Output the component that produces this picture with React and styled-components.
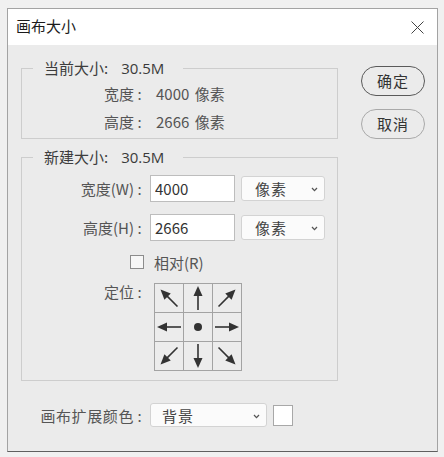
import React from 'react';
import styled, { createGlobalStyle } from 'styled-components';

const GlobalStyle = createGlobalStyle`
  html, body { margin: 0; padding: 0; background: #f0f0f0; }
  body {
    font-family: "Noto Sans CJK SC", "Microsoft YaHei", sans-serif;
    -webkit-font-smoothing: antialiased;
  }
  #root { padding: 8px 0 0 7px; }
`;

const Window = styled.div`
  box-sizing: content-box;
  width: 429px;
  height: 442px;
  border: 1px solid #a3a3a3;
  border-bottom-color: #5f5f5f;
  background: #ebebeb;
  display: flex;
  flex-direction: column;
`;

const TitleBar = styled.div`
  height: 36px;
  background: #ffffff;
  display: flex;
  align-items: center;
  justify-content: space-between;
  padding: 0 13px 0 8px;
`;

const Title = styled.div`
  font-size: 15px;
  color: #1b1b1b;
  line-height: 20px;
  margin-top: -2px;
`;

const CloseIcon = styled.svg`
  width: 13px;
  height: 13px;
  display: block;
`;

const Body = styled.div`
  flex: 1;
  display: flex;
  gap: 23px;
  padding: 13px 12px 0 13px;
`;

const LeftColumn = styled.div`
  width: 317px;
  display: flex;
  flex-direction: column;
`;

const Group = styled.fieldset`
  margin: ${p => p.$top || 0}px 0 0;
  min-width: 0;
  border: 1px solid #cdcdcd;
  padding: ${p => p.$pt}px 0 ${p => p.$pb}px;
`;

const Legend = styled.legend`
  margin-left: 11px;
  padding: 0 19px 0 11px;
  height: 20px;
  line-height: 20px;
  font-size: 15px;
  color: #3d3d3d;
  white-space: nowrap;
`;

const LegendValue = styled.span`
  font-family: "Open Sans", "Noto Sans", sans-serif;
  font-weight: 500;
  font-size: 15px;
  line-height: 20px;
  margin-left: 13px;
  color: #3a3a3a;
`;

const InfoGrid = styled.div`
  display: grid;
  grid-template-columns: 123px 1fr;
  column-gap: 5px;
  grid-auto-rows: 28px;
  align-items: center;
`;

const Label = styled.div`
  font-size: 15px;
  color: #555;
  text-align: right;
  white-space: nowrap;
  letter-spacing: ${p => p.$spread ? '0.6px' : '0'};
  align-self: ${p => p.$top ? 'start' : 'center'};
  line-height: ${p => p.$top ? '18px' : 'normal'};
`;

const Colon = styled.span`
  display: inline-block;
  width: 11px;
  text-align: center;
  letter-spacing: 0;
`;

const Value = styled.div`
  font-size: 15px;
  color: #555;
  padding-left: 6px;
  word-spacing: 2px;
`;

const FormGrid = styled.div`
  display: grid;
  grid-template-columns: 123px 1fr;
  column-gap: 5px;
  row-gap: 12px;
  grid-template-rows: 27px 27px 18px auto;
  align-items: center;
`;

const FieldLine = styled.div`
  display: flex;
  align-items: center;
  gap: 6px;
`;

const NumInput = styled.input`
  box-sizing: border-box;
  width: 85px;
  height: 27px;
  margin: 0;
  border: 1px solid #bdbdbd;
  background: #ffffff;
  padding: 0 4px 1px;
  font-family: inherit;
  font-size: 15px;
  color: #333;
  outline: none;
`;

const FakeSelect = styled.div`
  box-sizing: border-box;
  width: ${p => p.$w}px;
  height: ${p => p.$h}px;
  background: #fbfbfb;
  border: 1px solid #d3d3d3;
  border-radius: 3px;
  display: flex;
  align-items: center;
  justify-content: space-between;
  padding: 0 6px 0 ${p => p.$pl}px;
  font-size: 15px;
  color: #444;
  letter-spacing: 1px;
`;

const Chevron = styled.svg`
  width: 7px;
  height: 5px;
  display: block;
  margin-top: 2px;
`;

const CheckBox = styled.div`
  justify-self: end;
  margin-right: 1px;
  box-sizing: border-box;
  width: 14px;
  height: 14px;
  border: 1px solid #8c8c8c;
  background: #f7f7f7;
`;

const CheckText = styled.div`
  font-size: 15px;
  color: #555;
  padding-left: 4px;
`;

const AnchorGrid = styled.div`
  display: grid;
  grid-template-columns: repeat(3, 28px);
  grid-auto-rows: 28px;
  gap: 1px;
  padding: 1px;
  margin-left: 4px;
  background: #a3a3a3;
  width: max-content;
`;

const AnchorCell = styled.div`
  background: #ececec;
  display: flex;
  align-items: center;
  justify-content: center;
`;

const ArrowSvg = styled.svg`
  width: 28px;
  height: 28px;
  display: block;
`;

const BottomRow = styled.div`
  margin-top: 22px;
  display: grid;
  grid-template-columns: 124px 117px 20px;
  column-gap: 5px;
  align-items: center;
`;

const Swatch = styled.div`
  box-sizing: border-box;
  width: 20px;
  height: 21px;
  margin-left: 1px;
  background: #ffffff;
  border: 1px solid #a8a8a8;
`;

const ButtonColumn = styled.div`
  display: flex;
  flex-direction: column;
  gap: 13px;
  margin-top: 8px;
`;

const PillButton = styled.button`
  box-sizing: border-box;
  width: 64px;
  height: 30px;
  border-radius: 15px;
  border: 1px solid ${p => p.$primary ? '#5a5a5a' : '#a9a9a9'};
  background: transparent;
  font-family: inherit;
  font-size: 15px;
  color: #333;
  padding: 0 0 1px;
  letter-spacing: 1px;
`;

const ChevronIcon = () => (
  <Chevron viewBox="0 0 7 5">
    <polyline points="1,1 3.5,3.6 6,1" fill="none" stroke="#555" strokeWidth="1.3" />
  </Chevron>
);

const Arrow = ({ angle }) => (
  <ArrowSvg viewBox="0 0 28 28">
    <g transform={`rotate(${angle} 14 14)`} fill="#333" stroke="#333">
      <line x1="14" y1="26" x2="14" y2="11" strokeWidth="1.6" />
      <polygon points="14,2 9.5,12 18.5,12" stroke="none" />
    </g>
  </ArrowSvg>
);

const Dot = () => (
  <ArrowSvg viewBox="0 0 28 28">
    <circle cx="14" cy="14" r="4" fill="#333" />
  </ArrowSvg>
);

const anchors = [-45, 0, 45, -90, null, 90, -135, 180, 135];

const FieldLabel = ({ text, ...rest }) => (
  <Label {...rest}>
    {text}
    <Colon>:</Colon>
  </Label>
);

export default function App() {
  return (
    <>
      <GlobalStyle />
      <Window>
        <TitleBar>
          <Title>画布大小</Title>
          <CloseIcon viewBox="0 0 13 13">
            <path d="M0.5 0.5 L12.5 12.5 M12.5 0.5 L0.5 12.5" stroke="#444" strokeWidth="1" fill="none" />
          </CloseIcon>
        </TitleBar>
        <Body>
          <LeftColumn>
            <Group $pt={1} $pb={3}>
              <Legend>
                当前大小:<LegendValue>30.5M</LegendValue>
              </Legend>
              <InfoGrid>
                <FieldLabel text="宽度" />
                <Value>4000 像素</Value>
                <FieldLabel text="高度" />
                <Value>2666 像素</Value>
              </InfoGrid>
            </Group>
            <Group $top={8} $pt={8} $pb={9}>
              <Legend>
                新建大小:<LegendValue>30.5M</LegendValue>
              </Legend>
              <FormGrid>
                <FieldLabel text="宽度(W)" />
                <FieldLine>
                  <NumInput defaultValue="4000" />
                  <FakeSelect $w={84} $h={25} $pl={13}>
                    <span>像素</span>
                    <ChevronIcon />
                  </FakeSelect>
                </FieldLine>
                <FieldLabel text="高度(H)" />
                <FieldLine>
                  <NumInput defaultValue="2666" />
                  <FakeSelect $w={84} $h={25} $pl={13}>
                    <span>像素</span>
                    <ChevronIcon />
                  </FakeSelect>
                </FieldLine>
                <CheckBox />
                <CheckText>相对(R)</CheckText>
                <FieldLabel text="定位" $top />
                <AnchorGrid>
                  {anchors.map((a, i) => (
                    <AnchorCell key={i}>{a === null ? <Dot /> : <Arrow angle={a} />}</AnchorCell>
                  ))}
                </AnchorGrid>
              </FormGrid>
            </Group>
            <BottomRow>
              <FieldLabel text="画布扩展颜色" $spread />
              <FakeSelect $w={117} $h={24} $pl={11}>
                <span>背景</span>
                <ChevronIcon />
              </FakeSelect>
              <Swatch />
            </BottomRow>
          </LeftColumn>
          <ButtonColumn>
            <PillButton $primary>确定</PillButton>
            <PillButton>取消</PillButton>
          </ButtonColumn>
        </Body>
      </Window>
    </>
  );
}
